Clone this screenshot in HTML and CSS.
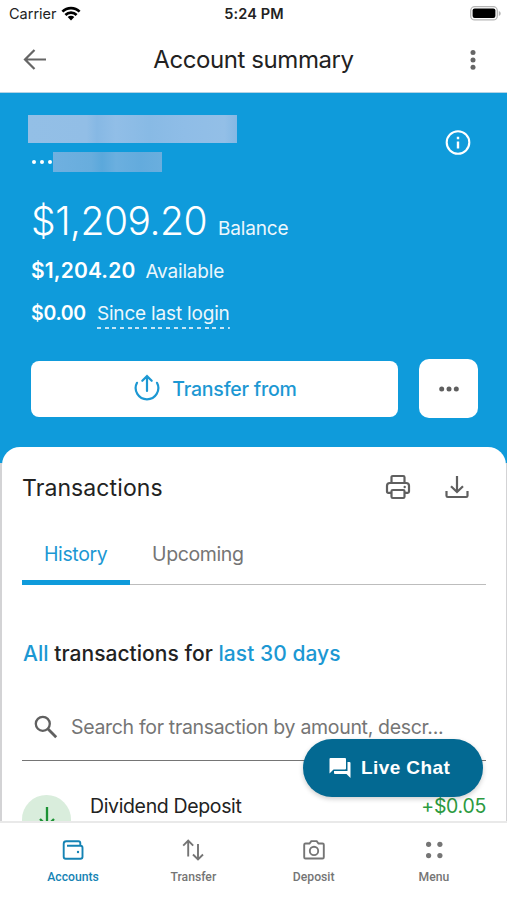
FILE: index.html
```html
<!DOCTYPE html>
<html lang="en">
<head>
  <meta charset="UTF-8">
  <meta name="viewport" content="width=device-width, initial-scale=1.0">
  <title>Account summary</title>
  <link rel="stylesheet" href="styles.css">
</head>
<body>
  <div class="app">
    <div class="status-bar">
      <div class="carrier">
        <span>Carrier</span>
        <svg width="20" height="15" viewBox="0 0 20 15" fill="none" stroke="#000" stroke-width="2.7">
          <path d="M1.4 5.6a12.3 12.3 0 0 1 17.2 0"/>
          <path d="M4.4 9a8 8 0 0 1 11.2 0"/>
          <path d="M10 14.4L6.7 11.1a4.7 4.7 0 0 1 6.6 0z" fill="#000" stroke="none"/>
        </svg>
      </div>
      <div class="time">5:24 PM</div>
      <svg class="battery" width="31" height="15" viewBox="0 0 31 15">
        <rect x=".7" y=".7" width="26.6" height="13.2" rx="4" fill="#fff" stroke="#b5b5b5" stroke-width="1.3"/>
        <rect x="2.6" y="2.6" width="22.8" height="9.4" rx="2" fill="#000"/>
        <path d="M28.8 5v5c1.3-.6 1.9-1.5 1.9-2.5s-.6-1.9-1.9-2.5z" fill="#b5b5b5"/>
      </svg>
    </div>

    <div class="header">
      <svg class="back" width="24" height="22" viewBox="0 0 24 22" fill="none" stroke="#666" stroke-width="2.2">
        <path d="M23 10.5H2M11.5 1L2 10.5l9.5 9.5"/>
      </svg>
      <h1>Account summary</h1>
      <svg class="more" width="6" height="20" viewBox="0 0 6 20" fill="#666">
        <circle cx="3" cy="2.5" r="2.5"/>
        <circle cx="3" cy="9.9" r="2.5"/>
        <circle cx="3" cy="17.3" r="2.5"/>
      </svg>
    </div>

    <div class="main">
      <div class="hero">
        <div class="account">
          <div>
            <div class="hidden-name"></div>
            <div class="number">
              <i></i><i></i><i></i>
              <div class="hidden-number"></div>
            </div>
          </div>
          <svg class="info" width="26" height="26" viewBox="0 0 26 26">
            <circle cx="13" cy="12.5" r="11.3" fill="none" stroke="#fff" stroke-width="2.1"/>
            <path d="M11.800 11.500h2.400v7h-2.400zM11.800 6.800h2.400v2.400h-2.400z" fill="#fff"/>
          </svg>
        </div>
        <div class="balance"><span class="big">$1,209.20</span><span class="label">Balance</span></div>
        <div class="available"><b>$1,204.20</b><span class="label">Available</span></div>
        <div class="since"><b>$0.00</b><span class="label dashed">Since last login</span></div>
        <div class="actions">
          <div class="transfer-btn">
            <svg width="26" height="28" viewBox="0 0 26 28" fill="none" stroke="#1c98d3" stroke-width="2.2" stroke-linecap="round">
              <path d="M3 8.800a11.300 11.300 0 1 0 20 0"/>
              <path d="M13 17V2.500M8.300 6.800L13 2.100l4.700 4.700"/>
            </svg>
            <span>Transfer from</span>
          </div>
          <div class="more-btn">
            <svg width="20" height="6" viewBox="0 0 20 6" fill="#5f5f5f">
              <circle cx="2.7" cy="3" r="2.5"/>
              <circle cx="10" cy="3" r="2.5"/>
              <circle cx="17.3" cy="3" r="2.5"/>
            </svg>
          </div>
        </div>
      </div>

      <div class="sheet">
        <div class="sheet-head">
          <h2>Transactions</h2>
          <svg class="print" width="26" height="26" viewBox="0 0 26 26" fill="none" stroke="#5f5f5f" stroke-width="2.2">
            <path d="M6.500 8.500V3.300q0-1.300 1.300-1.300h10.400q1.300 0 1.300 1.300v5.200"/>
            <path d="M6.300 18.800H3.300q-1.300 0-1.300-1.300V11.800q0-2.800 2.800-2.800h16.400q2.800 0 2.800 2.800v5.700q0 1.300-1.300 1.300h-3"/>
            <rect x="6.5" y="16" width="13" height="8" rx="1.3"/>
            <circle cx="19.7" cy="13" r="1.2" fill="#5f5f5f" stroke="none"/>
          </svg>
          <svg class="download" width="24" height="24" viewBox="0 0 24 24" fill="none" stroke="#5f5f5f" stroke-width="2.2">
            <path d="M12 1v16M6 11.200l6 5.800 6-5.800"/>
            <path d="M1.500 16v4.700q0 1.300 1.300 1.300h18.400q1.300 0 1.300-1.300V16"/>
          </svg>
        </div>

        <div class="tabs">
          <div class="tab active">History</div>
          <div class="tab">Upcoming</div>
        </div>

        <p class="filter"><a>All</a> transactions for <a>last 30 days</a></p>

        <div class="search">
          <svg width="24" height="24" viewBox="0 0 24 24" fill="none" stroke="#606060" stroke-width="2.3">
            <circle cx="8.8" cy="8.8" r="7"/>
            <path d="M13.800 13.800l8.400 8.400" stroke-width="2.8"/>
          </svg>
          <span>Search for transaction by amount, descr...</span>
        </div>

        <div class="transaction">
          <div class="badge">
            <svg width="20" height="26" viewBox="0 0 20 26" fill="none" stroke="#1c9234" stroke-width="2.3">
              <path d="M10 0v19M3 12l7 7 7-7"/>
            </svg>
          </div>
          <span class="name">Dividend Deposit</span>
          <span class="amount">+$0.05</span>
        </div>
      </div>
    </div>

    <div class="bottom-nav">
      <div class="nav-item active">
        <svg width="24" height="24" viewBox="0 0 24 24" fill="none" stroke="#1583b4" stroke-width="1.9">
          <path d="M6 7.700H19.500q2 0 2 2V18.700q0 2-2 2H4.700q-2 0-2-2V5.700q0-2.500 2.500-2.500H17.500q1.800 0 1.800 2v2.500"/>
          <circle cx="17" cy="14" r="1.2" fill="#1583b4" stroke="none"/>
        </svg>
        <span>Accounts</span>
      </div>
      <div class="nav-item">
        <svg width="24" height="24" viewBox="0 0 24 24" fill="none" stroke="#757575" stroke-width="1.9">
          <path d="M7.200 18.500V3M2.200 7.700l5-5 5 5"/>
          <path d="M17 6v15.500M12 16.500l5 5 5-5"/>
        </svg>
        <span>Transfer</span>
      </div>
      <div class="nav-item">
        <svg width="24" height="24" viewBox="0 0 24 24" fill="none" stroke="#757575" stroke-width="1.9">
          <path d="M3.500 5.500h4l1.800-2.400h5.400l1.800 2.400h4q1.300 0 1.300 1.300v12.400q0 1.300-1.300 1.300h-17q-1.300 0-1.300-1.300V6.800q0-1.300 1.300-1.300z"/>
          <circle cx="12" cy="12.9" r="4.2"/>
        </svg>
        <span>Deposit</span>
      </div>
      <div class="nav-item">
        <svg width="24" height="24" viewBox="0 0 24 24" fill="#757575">
          <circle cx="6.6" cy="6.3" r="2.6"/>
          <circle cx="17.9" cy="6.3" r="2.6"/>
          <circle cx="6.6" cy="17.6" r="2.6"/>
          <circle cx="17.9" cy="17.6" r="2.6"/>
        </svg>
        <span>Menu</span>
      </div>
    </div>

    <div class="live-chat">
      <svg width="22" height="22" viewBox="0 0 22 22" fill="#fff">
        <path d="M1.500 1h14.500q1 0 1 1v9.500q0 1-1 1H4.500L.500 16.500V2q0-1 1-1z"/>
        <path d="M18.500 5h2q1 0 1 1v15l-4-4H6q-1 0-1-1v-2h13.500z"/>
      </svg>
      <span>Live Chat</span>
    </div>
  </div>
</body>
</html>
```

FILE: styles.css
```css
body {
  margin: 0;
  font-family: Inter, "Liberation Sans", sans-serif;
  color: #222;
  background-color: white;
}
h1, h2, p {
  margin: 0;
  font-weight: 400;
}
svg {
  display: block;
  flex-shrink: 0;
}
span, b, h1, h2, .tab, .time {
  white-space: nowrap;
}
.app {
  position: relative;
  display: flex;
  flex-direction: column;
  height: 900px;
  overflow: hidden;
}

/* Status bar */
.status-bar {
  display: grid;
  grid-template-columns: 1fr auto 1fr;
  align-items: center;
  height: 27px;
  padding: 0 6px 0 9px;
  font-size: 14.5px;
}
.carrier {
  display: flex;
  align-items: center;
  gap: 4px;
}
.time {
  margin-left: -2px;
  font-weight: 600;
  letter-spacing: 0.1px;
}
.battery {
  justify-self: end;
}

/* Header */
.header {
  display: grid;
  grid-template-columns: 60px 1fr 60px;
  align-items: center;
  height: 65px;
  border-bottom: 1px solid #b4d3e5;
}
.header h1 {
  text-align: center;
  font-size: 24px;
  letter-spacing: -0.42px;
}
.back {
  margin-left: 23px;
}
.more {
  margin-left: 23px;
}

/* Balance area */
.main {
  flex: 1;
  overflow: hidden;
  background-color: #d3d3d5;
}
.hero {
  box-sizing: border-box;
  height: 370px;
  padding: 22px 29px 0 31px;
  background-color: #0f9bdb;
  color: white;
}
.account {
  display: flex;
  justify-content: space-between;
  height: 78px;
}
.hidden-name {
  width: 209px;
  height: 28px;
  margin-left: -3px;
  background: linear-gradient(90deg, #93bfe6, #92bee6 28%, #86b8e4 33%, #91bee7 42%, #88bae5 58%, #8fbde7 75%, #93bfe7 94%, #84b8e4);
}
.number {
  display: flex;
  align-items: center;
  margin-top: 9px;
}
.number i {
  width: 4px;
  height: 4px;
  margin: 0 2.6px 0 1.4px;
  border-radius: 50%;
  background-color: white;
}
.number i:nth-child(3) {
  margin-right: 0;
}
.hidden-number {
  width: 109px;
  height: 20px;
  margin-left: 1px;
  background: linear-gradient(90deg, #6fb0e0, #68addd 35%, #5ba8db 45%, #6bafdf 58%, #63abdd 80%, #6aaede);
}
.info {
  margin: 15px 7px 0 0;
}
.balance, .available, .since {
  display: flex;
  align-items: baseline;
}
.big {
  font-size: 39px;
  font-weight: 350;
  line-height: 48px;
  letter-spacing: -0.5px;
}
.label {
  font-size: 19px;
  letter-spacing: -0.18px;
  opacity: .92;
}
.balance {
  height: 48px;
  margin-top: 4px;
  gap: 11px;
}
.available {
  height: 26px;
  margin-top: 13px;
  gap: 10px;
}
.available b {
  font-size: 21px;
  line-height: 26px;
  font-weight: 600;
  letter-spacing: 0.15px;
}
.since {
  height: 30px;
  margin-top: 17px;
  gap: 11px;
}
.since b {
  font-size: 19.5px;
  line-height: 24px;
  font-weight: 600;
  letter-spacing: -0.3px;
}
.dashed {
  padding-bottom: 4px;
  background: repeating-linear-gradient(90deg, #d3ecf8 0 4px, transparent 4px 7.7px) bottom / 100% 2px no-repeat;
}
.actions {
  display: flex;
  align-items: center;
  justify-content: space-between;
  margin-top: 28px;
}
.transfer-btn {
  display: flex;
  align-items: center;
  justify-content: center;
  box-sizing: border-box;
  gap: 12px;
  width: 367px;
  height: 56px;
  padding-left: 2px;
  border-radius: 8px;
  background-color: white;
  color: #1c98d3;
  font-size: 19.5px;
  font-weight: 500;
  letter-spacing: -0.22px;
}
.transfer-btn svg {
  margin-top: -2px;
}
.more-btn {
  display: flex;
  align-items: center;
  justify-content: center;
  width: 59px;
  height: 59px;
  border-radius: 10px;
  background-color: white;
}

/* Transactions */
.sheet {
  position: relative;
  height: 450px;
  margin: -16px 1px 0 2px;
  padding: 0 20px;
  border-radius: 18px 18px 0 0;
  background-color: white;
}
.sheet-head {
  display: flex;
  align-items: center;
  height: 80px;
}
.sheet-head h2 {
  flex: 1;
  padding-top: 1px;
  font-size: 23px;
  letter-spacing: 0.1px;
}
.print {
  margin-right: 34px;
}
.download {
  margin-right: 17px;
}
.tabs {
  display: flex;
  box-sizing: border-box;
  height: 58px;
  border-bottom: 1px solid #bdbdbd;
}
.tab {
  box-sizing: border-box;
  height: 58px;
  padding: 15px 22px 0;
  font-size: 19.5px;
  line-height: 24px;
  letter-spacing: -0.38px;
  color: #757575;
}
.tab.active {
  width: 108px;
  border-bottom: 5px solid #0f9bdb;
  color: #1c98d3;
}
.filter {
  margin: 56px 0 0 1px;
  font-size: 21px;
  font-weight: 450;
  line-height: 26px;
  letter-spacing: 0.04px;
}
.filter a {
  color: #1c98d3;
}
.search {
  display: flex;
  box-sizing: border-box;
  align-items: center;
  height: 66px;
  margin-top: 28px;
  padding: 0 0 2px 12px;
  gap: 13px;
  border-bottom: 1px solid #757575;
  font-size: 19.5px;
  letter-spacing: -0.32px;
  color: #757575;
}
.transaction {
  display: flex;
  align-items: flex-start;
  margin-top: 34px;
  font-size: 19.5px;
  line-height: 22px;
}
.badge {
  display: flex;
  justify-content: center;
  box-sizing: border-box;
  width: 49px;
  height: 49px;
  padding-top: 12px;
  border-radius: 50%;
  background-color: #d9eddc;
}
.name {
  flex: 1;
  margin-left: 19px;
  letter-spacing: -0.36px;
}
.amount {
  letter-spacing: -0.3px;
  color: #2c9a40;
}

/* Bottom navigation */
.bottom-nav {
  display: grid;
  grid-template-columns: repeat(4, 120.3px);
  justify-content: center;
  box-sizing: border-box;
  height: 79px;
  border-top: 2px solid #e9e9e9;
  background-color: white;
}
.nav-item {
  display: flex;
  flex-direction: column;
  align-items: center;
  padding-top: 15px;
  gap: 8px;
  font-family: Roboto, sans-serif;
  font-size: 12.2px;
  font-weight: 500;
  color: #757575;
}
.nav-item.active {
  color: #1583b4;
}

.live-chat {
  position: absolute;
  right: 24px;
  bottom: 103px;
  display: flex;
  align-items: center;
  box-sizing: border-box;
  width: 180px;
  height: 58px;
  padding-left: 26px;
  gap: 10px;
  border-radius: 29px;
  background-color: #036992;
  box-shadow: 0 2px 5px rgba(0, 0, 0, 0.2);
  color: white;
  font-family: "Liberation Sans", Arial, sans-serif;
  font-size: 19px;
  font-weight: bold;
  letter-spacing: 0.4px;
}
```
